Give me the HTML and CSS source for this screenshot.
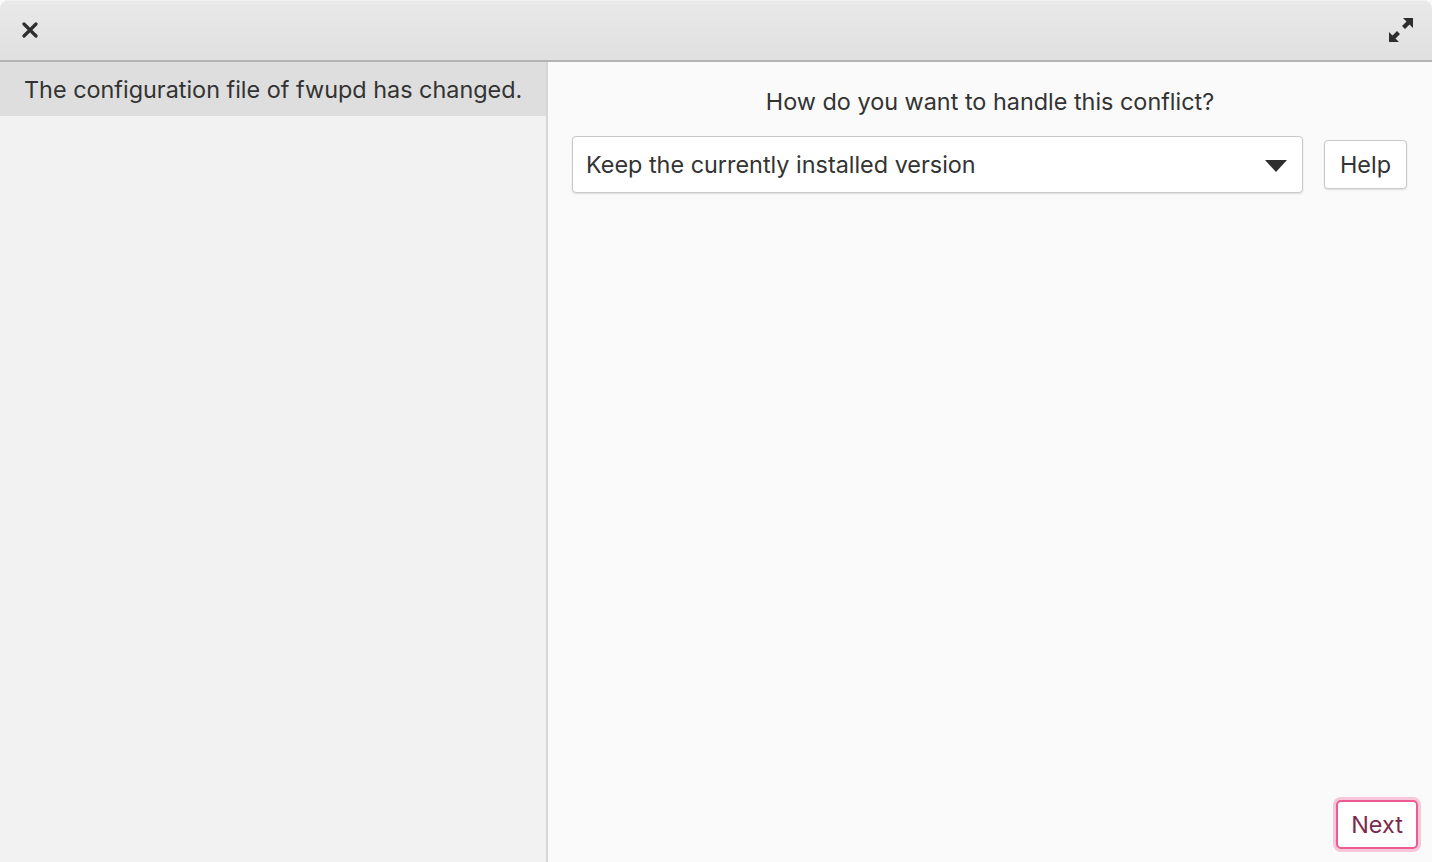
FILE: index.html
```html
<!DOCTYPE html>
<html>
<head>
<meta charset="utf-8">
<link rel="stylesheet" href="styles.css">
</head>
<body>
<div class="window">
  <header class="titlebar">
    <button class="icon-btn close" aria-label="Close">
      <svg width="16" height="16" viewBox="0 0 16 16"><path d="M2 2 L14 14 M14 2 L2 14" stroke="#2e2e2e" stroke-width="3.2" stroke-linecap="round"/></svg>
    </button>
    <button class="icon-btn maximize" aria-label="Maximize">
      <svg width="26" height="26" viewBox="0 0 26 26">
        <path d="M15 1 H25 V11 L21.5 7.5 L17 12 L14 9 L18.5 4.5 Z" fill="#2e2e2e"/>
        <path d="M1 15 V25 H11 L7.5 21.5 L12 17 L9 14 L4.5 18.5 Z" fill="#2e2e2e"/>
      </svg>
    </button>
  </header>
  <div class="body">
    <aside class="sidebar">
      <div class="row selected">The configuration file of fwupd has changed.</div>
    </aside>
    <main class="content">
      <h1 class="question">How do you want to handle this conflict?</h1>
      <div class="controls">
        <div class="combo">
          <span class="combo-label">Keep the currently installed version</span>
          <svg class="arrow" width="22" height="12" viewBox="0 0 22 12"><path d="M0 0 H22 L11 12 Z" fill="#2e2e2e"/></svg>
        </div>
        <button class="btn help">Help</button>
      </div>
      <div class="spacer"></div>
      <div class="footer">
        <button class="btn next">Next</button>
      </div>
    </main>
  </div>
</div>
</body>
</html>
```

FILE: styles.css
```css
* { box-sizing: border-box; }
html, body { margin: 0; padding: 0; height: 100%; }
body {
  font-family: Inter, "Noto Sans", sans-serif;
  color: #333;
  background: #fafafa;
}
.window {
  width: 1432px;
  height: 862px;
  display: flex;
  flex-direction: column;
  overflow: hidden;
  border-radius: 8px 8px 0 0;
  background: #fafafa;
}
.titlebar {
  height: 62px;
  flex: none;
  display: flex;
  align-items: center;
  justify-content: space-between;
  padding: 0 18px 0 22px;
  background: linear-gradient(#e9e9e9, #e0e0e0);
  border-bottom: 2px solid #b4b4b4;
  border-radius: 8px 8px 0 0;
  box-shadow: inset 0 1px 0 #f2f2f2;
}
.icon-btn {
  border: none;
  background: none;
  padding: 0;
  display: flex;
  align-items: center;
  justify-content: center;
}
.body {
  flex: 1;
  display: flex;
  min-height: 0;
}
.sidebar {
  width: 548px;
  flex: none;
  background: #f2f2f2;
  border-right: 2px solid #d6d6d6;
}
.row {
  height: 54px;
  display: flex;
  align-items: center;
  padding-left: 24px;
  font-size: 23.4px;
  color: #333;
}
.row.selected { background: #dedede; }
.content {
  flex: 1;
  display: flex;
  flex-direction: column;
  padding: 24px 24px 13px 24px;
  background: #fafafa;
}
.question {
  margin: 0;
  font-size: 23.4px;
  font-weight: 400;
  text-align: center;
  line-height: 32px;
  color: #333;
}
.controls {
  margin-top: 18px;
  display: flex;
  align-items: center;
  gap: 21px;
}
.combo {
  flex: 1;
  height: 57px;
  display: flex;
  align-items: center;
  justify-content: space-between;
  padding: 0 15px 0 13px;
  background: #fff;
  border: 1px solid #c9c9c9;
  border-radius: 4px;
  box-shadow: 0 1px 2px rgba(0,0,0,0.12);
  font-size: 23.4px;
  color: #333;
}
.arrow { margin-top: 2px; }
.btn {
  font-family: Inter, "Noto Sans", sans-serif;
  font-size: 23.4px;
  color: #333;
  background: #fff;
  border: 1px solid #c9c9c9;
  border-radius: 4px;
  box-shadow: 0 1px 2px rgba(0,0,0,0.12);
  padding: 0;
}
.help {
  height: 49px;
  width: 83px;
  margin-right: 1px;
}
.spacer { flex: 1; }
.footer {
  display: flex;
  justify-content: flex-end;
  margin-right: -10px;
}
.next {
  height: 49px;
  width: 82px;
  color: #7b2a4c;
  border: 2px solid #ec5b93;
  box-shadow: 0 0 0 3px #f7c6d8;
  border-radius: 5px;
}
```
